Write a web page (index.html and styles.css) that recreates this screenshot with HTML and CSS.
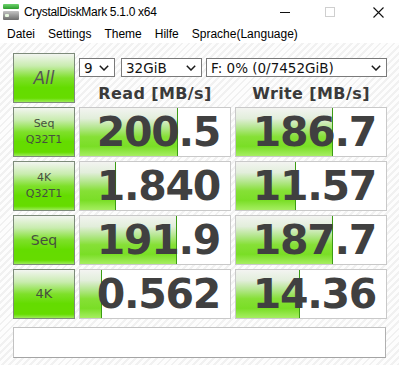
FILE: index.html
```html
<!DOCTYPE html>
<html lang="de">

<head>
  <meta charset="UTF-8">
  <title>CrystalDiskMark 5.1.0 x64</title>
  <link rel="stylesheet" href="styles.css">
</head>

<body>
  <header class="titlebar">
    <svg class="app-icon" width="16" height="16" viewBox="0 0 16 16">
      <defs>
        <linearGradient id="g-top" x1="0" y1="0" x2="0" y2="1">
          <stop offset="0" stop-color="#6fd36f" />
          <stop offset="1" stop-color="#2a9a2a" />
        </linearGradient>
        <linearGradient id="g-disk" x1="0" y1="0" x2="0" y2="1">
          <stop offset="0" stop-color="#c4c4c4" />
          <stop offset="1" stop-color="#6c6c6c" />
        </linearGradient>
      </defs>
      <rect x="0" y="0" width="16" height="5" rx="1" fill="url(#g-top)" />
      <rect x="0" y="7" width="16" height="9" rx="1" fill="url(#g-disk)" />
      <rect x="2" y="10" width="4" height="3" rx="1" fill="#e8f8e0" />
    </svg>
    <span class="title">CrystalDiskMark 5.1.0 x64</span>
    <div class="controls">
      <span class="ctl-min"></span>
      <span class="ctl-max"></span>
      <svg class="ctl-close" width="11" height="11" viewBox="0 0 11 11">
        <path d="M0.5 0.5 L10.5 10.5 M10.5 0.5 L0.5 10.5" stroke="#111" stroke-width="1.1" />
      </svg>
    </div>
  </header>

  <nav class="menu">
    <span>Datei</span>
    <span>Settings</span>
    <span>Theme</span>
    <span>Hilfe</span>
    <span>Sprache(Language)</span>
  </nav>

  <main class="panel">
    <div class="top">
      <div class="btn btn-all">All</div>
      <div class="settings">
        <div class="combos">
          <div class="combo combo-count">9
            <svg class="chev" width="10" height="6" viewBox="0 0 10 6"><path d="M0.8 0.8 L5 5 L9.2 0.8" /></svg>
          </div>
          <div class="combo combo-size">32GiB
            <svg class="chev" width="10" height="6" viewBox="0 0 10 6"><path d="M0.8 0.8 L5 5 L9.2 0.8" /></svg>
          </div>
          <div class="combo combo-drive">F: 0% (0/7452GiB)
            <svg class="chev" width="10" height="6" viewBox="0 0 10 6"><path d="M0.8 0.8 L5 5 L9.2 0.8" /></svg>
          </div>
        </div>
        <div class="heads">
          <div>Read [MB/s]</div>
          <div>Write [MB/s]</div>
        </div>
      </div>
    </div>

    <div class="results">
      <div class="btn">Seq<br>Q32T1</div>
      <div class="cell" style="--fill: 98px">200.5</div>
      <div class="cell" style="--fill: 97px">186.7</div>

      <div class="btn">4K<br>Q32T1</div>
      <div class="cell" style="--fill: 36px">1.840</div>
      <div class="cell" style="--fill: 60px">11.57</div>

      <div class="btn btn-seq">Seq</div>
      <div class="cell" style="--fill: 97px">191.9</div>
      <div class="cell" style="--fill: 97px">187.7</div>

      <div class="btn btn-4k">4K</div>
      <div class="cell" style="--fill: 22px">0.562</div>
      <div class="cell" style="--fill: 64px">14.36</div>
    </div>

    <div class="comment"></div>
  </main>
</body>

</html>
```

FILE: styles.css
```css
* {
  box-sizing: border-box;
}

html {
  background: #fff;
}

body {
  margin: 0;
  font-family: 'Liberation Sans', Arial, sans-serif;
  color: #000;
  height: 365px;
  overflow: hidden;
}

.titlebar {
  display: flex;
  align-items: center;
  height: 24px;
  background: #fff;
}

.app-icon {
  margin-left: 3px;
}

.title {
  margin-left: 5px;
  font-size: 12px;
  letter-spacing: -0.3px;
}

.controls {
  display: flex;
  align-items: center;
  margin-left: auto;
  margin-right: 15px;
}

.ctl-min {
  width: 10px;
  height: 1px;
  background: #111;
}

.ctl-max {
  width: 10px;
  height: 10px;
  margin-left: 35px;
  border: 1px solid #cfcfcf;
}

.ctl-close {
  margin-left: 38px;
}

.menu {
  display: flex;
  gap: 13px;
  height: 19px;
  padding-left: 7px;
  font-size: 12px;
  line-height: 21px;
  background: #fff;
}

.panel {
  height: 322px;
  padding: 10px 13px 0;
  background: repeating-linear-gradient(135deg, #fdfdfd 0 3px, #f1f1f1 3px 5px);
}

.top,
.results {
  display: grid;
  grid-template-columns: 62px 152px 152px;
  column-gap: 4px;
}

.btn {
  display: flex;
  align-items: center;
  justify-content: center;
  text-align: center;
  font-family: 'DejaVu Sans', Verdana, sans-serif;
  font-size: 11px;
  line-height: 16px;
  color: #46503f;
  border: 1px solid #7d8b7a;
  background: linear-gradient(to bottom, #f2f5f0 0%, #c8ecae 25%, #7ee02a 50%, #64dc00 70%, #66dc00 92%, #9cec58 100%);
}

.btn-all {
  height: 50px;
  font-size: 17px;
  font-style: italic;
  color: #555;
}

.btn-seq {
  font-size: 14px;
}

.btn-4k {
  font-size: 13px;
}

.settings {
  grid-column: 2 / 4;
  display: flex;
  flex-direction: column;
}

.combos {
  display: flex;
  margin-top: 5px;
  height: 19px;
}

.combo {
  display: flex;
  align-items: center;
  justify-content: space-between;
  padding: 0 5px 0 4px;
  border: 1px solid #7a7a7a;
  background: #fff;
  font-family: 'DejaVu Sans', Verdana, sans-serif;
  font-size: 13.5px;
  color: #111;
}

.combo-count {
  width: 36px;
}

.combo-size {
  width: 81px;
  margin-left: 6px;
}

.combo-drive {
  width: 181px;
  margin-left: 4px;
}

.chev path {
  fill: none;
  stroke: #1a1a1a;
  stroke-width: 1.5;
}

.heads {
  display: grid;
  grid-template-columns: 152px 152px;
  column-gap: 4px;
  padding-top: 7px;
  font-family: 'DejaVu Sans', Verdana, sans-serif;
  font-weight: bold;
  font-size: 16px;
  letter-spacing: 0.4px;
  color: #3a3a3a;
  text-align: center;
}

.results {
  margin-top: 4px;
  grid-auto-rows: 50px;
  row-gap: 4px;
}

.cell {
  border: 1px solid #c9c9c9;
  padding-right: 10px;
  text-align: right;
  font-family: 'DejaVu Sans', Verdana, sans-serif;
  font-weight: bold;
  font-size: 41px;
  line-height: 48px;
  letter-spacing: -1.3px;
  color: #404040;
  background-color: #fff;
  background-image:
    linear-gradient(to right, transparent calc(100% - 1px), #3c9c14 0),
    linear-gradient(to bottom, #f3f4f1 0%, #e2eedb 22%, #b2e68a 42%, #86e036 60%, #7ade26 80%, #a6ee62 100%);
  background-repeat: no-repeat;
  background-size: var(--fill) 100%;
}

.comment {
  margin-top: 8px;
  height: 31px;
  border: 1px solid #c2c2c2;
  border-bottom-color: #a4a4a4;
  border-right-color: #b0b0b0;
  background: #fff;
}
```
